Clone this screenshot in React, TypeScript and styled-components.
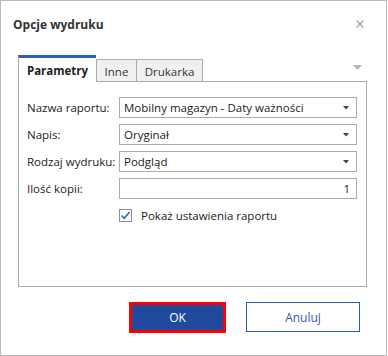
import React from 'react'
import styled, { createGlobalStyle } from "styled-components"

const GlobalStyle = createGlobalStyle`
  html, body {
    margin: 0;
    padding: 0;
    background: #ffffff;
  }
  * {
    box-sizing: border-box;
  }
`

const fields = [
  { label: "Nazwa raportu:", value: "Mobilny magazyn - Daty ważności", select: true },
  { label: "Napis:", value: "Oryginał", select: true },
  { label: "Rodzaj wydruku:", value: "Podgląd", select: true },
  { label: "Ilość kopii:", value: "1", select: false },
]

const App = () => {
  return (
    <>
      <GlobalStyle />
      <Dialog>
        <Header>
          <Title>Opcje wydruku</Title>
          <Close>
            <svg width="8" height="8" viewBox="0 0 8 8">
              <path d="M0.5 0.5 L7.5 7.5 M7.5 0.5 L0.5 7.5" stroke="#a0a0a0" strokeWidth="1.1" />
            </svg>
          </Close>
        </Header>
        <Content>
          <TabBar>
            <Tab $active $width={78}>Parametry</Tab>
            <Tab $first $width={41}>Inne</Tab>
            <Tab $width={66}>Drukarka</Tab>
            <TabMenu>
              <svg width="9" height="5" viewBox="0 0 9 5">
                <path d="M0 0 L9 0 L4.5 5 Z" fill="#b8b8b8" />
              </svg>
            </TabMenu>
          </TabBar>
          <Panel>
            <Form>
              {fields.map((f) => (
                <React.Fragment key={f.label}>
                  <Label>{f.label}</Label>
                  <Field $right={!f.select}>
                    <span>{f.value}</span>
                    {f.select && (
                      <Caret>
                        <svg width="6" height="4" viewBox="0 0 6 4">
                          <path d="M0 0 L6 0 L3 3.5 Z" fill="#444" />
                        </svg>
                      </Caret>
                    )}
                  </Field>
                </React.Fragment>
              ))}
            </Form>
            <CheckRow>
              <CheckBox>
                <svg width="11" height="11" viewBox="0 0 11 11">
                  <path d="M1.5 5.5 L4.2 8.3 L9.6 2" stroke="#2b5fc8" strokeWidth="1.5" fill="none" />
                </svg>
              </CheckBox>
              <CheckLabel>Pokaż ustawienia raportu</CheckLabel>
            </CheckRow>
          </Panel>
          <Footer>
            <OkButton>OK</OkButton>
            <CancelButton>Anuluj</CancelButton>
          </Footer>
        </Content>
      </Dialog>
    </>
  )
}

export default App

const Dialog = styled.div`
  width: 387px;
  height: 356px;
  border: 1px solid #b9b9b9;
  background: #ffffff;
  font-family: "Open Sans", "Noto Sans", sans-serif;
  color: #222222;
`
const Header = styled.div`
  display: flex;
  align-items: center;
  justify-content: space-between;
  height: 46px;
  padding: 0 22px 0 12px;
`
const Title = styled.div`
  font-size: 12px;
  font-weight: 700;
  color: #333333;
`
const Close = styled.div`
  display: flex;
  width: 8px;
  height: 8px;
`
const Content = styled.div`
  padding: 8px 19px 0 17px;
`
const TabBar = styled.div`
  display: flex;
  align-items: flex-end;
  height: 26px;
  position: relative;
`
const Tab = styled.div<{ $active?: boolean; $first?: boolean; $width: number }>`
  width: ${(p) => p.$width}px;
  height: ${(p) => (p.$active ? 27 : 22)}px;
  margin-bottom: ${(p) => (p.$active ? -1 : 0)}px;
  display: flex;
  align-items: center;
  justify-content: center;
  font-size: 11.5px;
  font-weight: ${(p) => (p.$active ? 700 : 400)};
  color: ${(p) => (p.$active ? "#222" : "#333")};
  background: ${(p) => (p.$active ? "#ffffff" : "#f0f0f0")};
  border-top: ${(p) => (p.$active ? "3px solid #2b5fc8" : "1px solid #ababab")};
  border-left: ${(p) => (p.$active || p.$first ? "1px solid #ababab" : "none")};
  border-right: ${(p) => (p.$active ? "none" : "1px solid #ababab")};
  padding-top: ${(p) => (p.$active ? 0 : 1)}px;
  position: relative;
  z-index: 1;
`
const TabMenu = styled.div`
  margin-left: auto;
  margin-right: 5px;
  align-self: flex-start;
  margin-top: 10px;
  display: flex;
`
const Panel = styled.div`
  height: 206px;
  border: 1px solid #ababab;
  padding: 15px 8px 0 8px;
`
const Form = styled.div`
  display: grid;
  grid-template-columns: 92px 238px;
  row-gap: 6px;
  align-items: center;
`
const Label = styled.div`
  font-size: 11.5px;
  white-space: nowrap;
  color: #222;
`
const Field = styled.div<{ $right?: boolean }>`
  height: 21px;
  border: 1px solid #ababab;
  display: flex;
  align-items: center;
  justify-content: ${(p) => (p.$right ? "flex-end" : "space-between")};
  padding: 0 6px 0 4px;
  font-size: 11.5px;
  white-space: nowrap;
  color: #222;
`
const Caret = styled.div`
  display: flex;
  margin-right: 1px;
`
const CheckRow = styled.div`
  display: flex;
  align-items: center;
  margin-top: 9px;
  padding-left: 92px;
`
const CheckBox = styled.div`
  width: 13px;
  height: 13px;
  border: 1px solid #8f8f8f;
  display: flex;
  align-items: center;
  justify-content: center;
`
const CheckLabel = styled.div`
  margin-left: 9px;
  font-size: 11.5px;
  color: #222;
`
const Footer = styled.div`
  display: flex;
  justify-content: flex-end;
  align-items: flex-start;
  gap: 20px;
  margin-top: 15px;
  padding-right: 7px;
`
const OkButton = styled.div`
  width: 97px;
  height: 31px;
  border: 3px solid #ff0000;
  background: #1f4a9e;
  color: #ffffff;
  font-size: 12px;
  display: flex;
  align-items: center;
  justify-content: center;
`
const CancelButton = styled.div`
  width: 114px;
  height: 30px;
  border: 1px solid #2b5cc4;
  background: #ffffff;
  color: #3b52c0;
  font-size: 12px;
  display: flex;
  align-items: center;
  justify-content: center;
`
